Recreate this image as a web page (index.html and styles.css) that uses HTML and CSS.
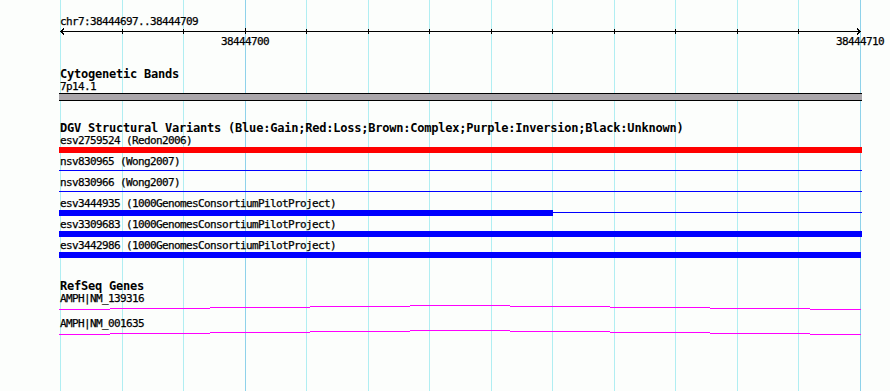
FILE: index.html
```html
<!DOCTYPE html>
<html>

<head>
    <title>chr7:38444697..38444709</title>
    <link rel="stylesheet" href="styles.css">
</head>

<body>
    <div class="panel">
        <!-- grid lines, one per base -->
        <svg class="grid" width="890" height="391">
            <g class="minor">
                <line x1="60.5" y1="0" x2="60.5" y2="391" />
                <line x1="122.5" y1="0" x2="122.5" y2="391" />
                <line x1="183.5" y1="0" x2="183.5" y2="391" />
                <line x1="306.5" y1="0" x2="306.5" y2="391" />
                <line x1="368.5" y1="0" x2="368.5" y2="391" />
                <line x1="429.5" y1="0" x2="429.5" y2="391" />
                <line x1="491.5" y1="0" x2="491.5" y2="391" />
                <line x1="552.5" y1="0" x2="552.5" y2="391" />
                <line x1="614.5" y1="0" x2="614.5" y2="391" />
                <line x1="675.5" y1="0" x2="675.5" y2="391" />
                <line x1="737.5" y1="0" x2="737.5" y2="391" />
                <line x1="798.5" y1="0" x2="798.5" y2="391" />
            </g>
            <g class="major">
                <line x1="245.5" y1="0" x2="245.5" y2="391" />
                <line x1="860.5" y1="0" x2="860.5" y2="391" />
            </g>
        </svg>

        <div class="ruler">
            <div class="ruler-label">chr7:38444697..38444709</div>
            <svg class="axis" width="890" height="8">
                <path d="M60 4.5 H861 M64 1.5 L61 4.5 L64 7.5 M857 1.5 L860 4.5 L857 7.5" />
                <path d="M122.5 2 V7 M183.5 2 V7 M245.5 1 V7 M306.5 2 V7 M368.5 2 V7 M429.5 2 V7 M491.5 2 V7 M552.5 2 V7 M614.5 2 V7 M675.5 2 V7 M737.5 2 V7 M798.5 2 V7" />
            </svg>
            <div class="scale">
                <span class="scale-label" style="left: 245px">38444700</span>
                <span class="scale-label" style="left: 860px">38444710</span>
            </div>
        </div>

        <section class="track track-bands">
            <h2 class="track-title">Cytogenetic Bands</h2>
            <div class="feature">
                <div class="feature-label">7p14.1</div>
                <div class="glyph">
                    <div class="band"></div>
                </div>
            </div>
        </section>

        <section class="track track-dgv">
            <h2 class="track-title">DGV Structural Variants (Blue:Gain;Red:Loss;Brown:Complex;Purple:Inversion;Black:Unknown)</h2>
            <div class="feature">
                <div class="feature-label">esv2759524 (Redon2006)</div>
                <div class="glyph">
                    <div class="bar loss" style="width: 803px"></div>
                </div>
            </div>
            <div class="feature">
                <div class="feature-label">nsv830965 (Wong2007)</div>
                <div class="glyph">
                    <div class="span gain"></div>
                </div>
            </div>
            <div class="feature">
                <div class="feature-label">nsv830966 (Wong2007)</div>
                <div class="glyph">
                    <div class="span gain"></div>
                </div>
            </div>
            <div class="feature">
                <div class="feature-label">esv3444935 (1000GenomesConsortiumPilotProject)</div>
                <div class="glyph">
                    <div class="bar gain" style="width: 494px"></div>
                    <div class="span gain"></div>
                </div>
            </div>
            <div class="feature">
                <div class="feature-label">esv3309683 (1000GenomesConsortiumPilotProject)</div>
                <div class="glyph">
                    <div class="bar gain" style="width: 803px"></div>
                </div>
            </div>
            <div class="feature">
                <div class="feature-label">esv3442986 (1000GenomesConsortiumPilotProject)</div>
                <div class="glyph">
                    <div class="bar gain" style="width: 802px"></div>
                </div>
            </div>
        </section>

        <section class="track track-genes">
            <h2 class="track-title">RefSeq Genes</h2>
            <div class="feature">
                <div class="feature-label">AMPH|NM_139316</div>
                <div class="glyph">
                    <svg class="gene" width="803" height="13">
                        <path d="M0 5.5 H51 M51 4.5 H151 M151 3.5 H251 M251 2.5 H351 M351 1.5 H451 M451 2.5 H551 M551 3.5 H651 M651 4.5 H751 M751 5.5 H802" />
                    </svg>
                </div>
            </div>
            <div class="feature">
                <div class="feature-label">AMPH|NM_001635</div>
                <div class="glyph">
                    <svg class="gene" width="803" height="13">
                        <path d="M0 5.5 H51 M51 4.5 H151 M151 3.5 H251 M251 2.5 H351 M351 1.5 H451 M451 2.5 H551 M551 3.5 H651 M651 4.5 H751 M751 5.5 H802" />
                    </svg>
                </div>
            </div>
        </section>
    </div>
</body>

</html>
```

FILE: styles.css
```css
body {
    margin: 0;
    background-color: #fcfefc;
    font-family: "DejaVu Sans Mono", "Liberation Mono", monospace;
    color: #000;
}

.panel {
    position: relative;
    z-index: 0;
    width: 890px;
    height: 391px;
    overflow: hidden;
}

.grid {
    position: absolute;
    top: 0;
    left: 0;
    z-index: -1;
}

.grid line {
    stroke-width: 1;
    shape-rendering: crispEdges;
}

.grid .minor line {
    stroke: #b0eef2;
}

.grid .major line {
    stroke: #8ed2ea;
}

.ruler {
    padding-top: 15px;
    height: 52px;
}

.ruler-label,
.feature-label,
.scale-label {
    box-sizing: border-box;
    height: 12px;
    padding-top: 1px;
    font-size: 11px;
    line-height: 12px;
    letter-spacing: -0.62px;
    white-space: nowrap;
    -webkit-text-stroke: 0.25px #000;
}

.ruler-label {
    padding-left: 60px;
}

.axis {
    display: block;
}

.axis path {
    fill: none;
    stroke: #000;
    stroke-width: 1;
    shape-rendering: crispEdges;
}

.scale {
    position: relative;
    height: 12px;
}

.scale-label {
    position: absolute;
    top: 0;
    transform: translateX(-50%);
}

.track-title {
    box-sizing: border-box;
    height: 13px;
    margin: 0;
    padding-top: 1px;
    padding-left: 60px;
    font-size: 12px;
    line-height: 13px;
    letter-spacing: -0.22px;
    font-weight: bold;
    white-space: nowrap;
}

.track-dgv {
    margin-top: 20px;
}

.track-genes {
    margin-top: 19px;
}

.feature-label {
    padding-left: 60px;
}

.glyph {
    display: flex;
    align-items: flex-start;
    margin-left: 59px;
    width: 803px;
    height: 9px;
}

.band {
    margin-top: 1px;
    width: 803px;
    height: 6px;
    background-color: #aaa6aa;
    border-top: 1px solid #000;
    border-bottom: 1px solid #000;
}

.bar {
    margin-top: 1px;
    height: 6px;
}

.span {
    flex: 1;
    margin-top: 3px;
    height: 1px;
}

.bar.gain {
    background-color: #0000ff;
}

.span.gain {
    background-color: #0000ff;
}

.bar.loss {
    background-color: #ff0000;
}

.track-genes .glyph {
    height: 13px;
}

.gene {
    display: block;
}

.gene path {
    fill: none;
    stroke: #ff00ff;
    stroke-width: 1;
    shape-rendering: crispEdges;
}
```
